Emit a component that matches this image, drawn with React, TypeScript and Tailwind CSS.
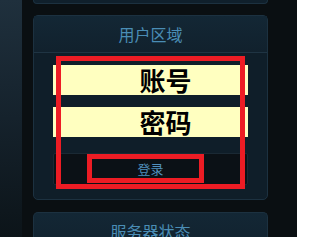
import React from "react";

const cjk = { fontFamily: '"Noto Sans CJK SC", "Noto Sans", sans-serif' };

const App = () => {
  return (
    <div className="relative flex h-[237px] w-[297px] overflow-hidden bg-[#0a0f12]" style={cjk}>
      <div className="w-[22px] shrink-0 bg-gradient-to-b from-[#1f303d] via-[#15222c] to-[#0c1419]" />
      <div className="ml-[11px] flex w-[235px] shrink-0 flex-col">
        <div className="h-[4px] shrink-0 rounded-b-[5px] border border-t-0 border-[#1c3140] bg-[#10202c]" />

        <div className="mt-[11px] flex h-[185px] shrink-0 flex-col rounded-[5px] border border-[#1c3140] bg-[#0f1e29]">
          <div className="flex h-[37px] items-center justify-center border-b border-[#1f3443] bg-gradient-to-b from-[#132735] to-[#11212d] text-[16px] text-[#4a8db5]">
            用户区域
          </div>
          <div className="flex flex-col px-[19px] pt-[12px]">
            <div className="flex h-[30px] items-center justify-center bg-[#ffffc0] pl-[30px] text-[26px] font-bold leading-none text-black">
              账号
            </div>
            <div className="mt-[12px] flex h-[30px] items-center justify-center bg-[#ffffc0] pl-[30px] text-[26px] font-bold leading-none text-black">
              密码
            </div>
            <button className="mt-[16px] flex h-[32px] items-center justify-center rounded-[2px] border border-[#1a2934] bg-[#0b1116] text-[13px] text-[#4f8fbd]">
              登录
            </button>
          </div>
        </div>

        <div className="mt-[12px] flex h-[40px] shrink-0 flex-col rounded-t-[5px] border border-b-0 border-[#1c3140] bg-gradient-to-b from-[#132735] to-[#11212d]">
          <div className="flex h-[36px] items-center justify-center text-[16px] text-[#4a8db5]">
            服务器状态
          </div>
        </div>
      </div>

      <div className="pointer-events-none absolute left-[56px] top-[56px] h-[133px] w-[189px] border-[5px] border-[#ed1c24]" />
      <div className="pointer-events-none absolute left-[87px] top-[154px] h-[29px] w-[117px] border-[5px] border-[#ed1c24]" />
    </div>
  );
};

export default App;
